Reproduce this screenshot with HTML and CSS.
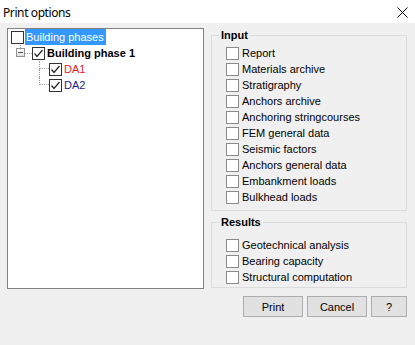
FILE: index.html
```html
<!DOCTYPE html>
<html lang="en">
<head>
    <meta charset="UTF-8">
    <title>Print options</title>
    <link rel="stylesheet" href="styles.css">
</head>
<body>
    <div class="titlebar">
        <span class="title">Print options</span>
        <span class="close">
            <svg width="11" height="11" viewBox="0 0 11 11"><path d="M0.5 0.5 L10.5 10.5 M10.5 0.5 L0.5 10.5" stroke="#000" stroke-width="1"/></svg>
        </span>
    </div>
    <div class="main">
        <div class="tree">
            <div class="node root">
                <span class="cb"></span>
                <span class="label selected">Building phases</span>
            </div>
            <div class="node level1">
                <span class="exp-col">
                    <span class="stub"></span>
                    <span class="expander"><span class="minus"></span></span>
                </span>
                <span class="hline"></span>
                <span class="cb checked"><svg width="11" height="11" viewBox="0 0 11 11"><path d="M1.5 5.5 L4 8.5 L9.5 2" fill="none" stroke="#222" stroke-width="1.2"/></svg></span>
                <span class="label bold">Building phase 1</span>
            </div>
            <div class="node level2">
                <span class="conn"><span class="conn-top"></span><span class="conn-bottom"></span></span>
                <span class="cb checked"><svg width="11" height="11" viewBox="0 0 11 11"><path d="M1.5 5.5 L4 8.5 L9.5 2" fill="none" stroke="#222" stroke-width="1.2"/></svg></span>
                <span class="label red">DA1</span>
            </div>
            <div class="node level2">
                <span class="conn"><span class="conn-top"></span></span>
                <span class="cb checked"><svg width="11" height="11" viewBox="0 0 11 11"><path d="M1.5 5.5 L4 8.5 L9.5 2" fill="none" stroke="#222" stroke-width="1.2"/></svg></span>
                <span class="label navy">DA2</span>
            </div>
        </div>
        <div class="side">
            <fieldset class="group input-group">
                <legend>Input</legend>
                <div class="options">
                    <label class="opt"><span class="box"></span>Report</label>
                    <label class="opt"><span class="box"></span>Materials archive</label>
                    <label class="opt"><span class="box"></span>Stratigraphy</label>
                    <label class="opt"><span class="box"></span>Anchors archive</label>
                    <label class="opt"><span class="box"></span>Anchoring stringcourses</label>
                    <label class="opt"><span class="box"></span>FEM general data</label>
                    <label class="opt"><span class="box"></span>Seismic factors</label>
                    <label class="opt"><span class="box"></span>Anchors general data</label>
                    <label class="opt"><span class="box"></span>Embankment loads</label>
                    <label class="opt"><span class="box"></span>Bulkhead loads</label>
                </div>
            </fieldset>
            <fieldset class="group results-group">
                <legend>Results</legend>
                <div class="options">
                    <label class="opt"><span class="box"></span>Geotechnical analysis</label>
                    <label class="opt"><span class="box"></span>Bearing capacity</label>
                    <label class="opt"><span class="box"></span>Structural computation</label>
                </div>
            </fieldset>
            <div class="buttons">
                <button class="btn wide">Print</button>
                <button class="btn wide">Cancel</button>
                <button class="btn small">?</button>
            </div>
        </div>
    </div>
</body>
</html>
```

FILE: styles.css
```css
body {
    margin: 0;
    width: 415px;
    height: 345px;
    background: #f0f0f0;
    font-family: "Liberation Sans", Arial, sans-serif;
    font-size: 11px;
    color: #000;
    overflow: hidden;
}
.titlebar {
    height: 23px;
    background: #fff;
    display: flex;
    align-items: center;
    justify-content: space-between;
    padding: 0 7px 0 3px;
}
.title {
    font-family: "Noto Sans", sans-serif;
    font-size: 12px;
    letter-spacing: -0.4px;
    padding-top: 1px;
}
.close {
    display: flex;
    width: 11px;
    height: 11px;
    margin-top: 1px;
}
.main {
    display: flex;
    padding: 5px 0 0 7px;
    gap: 7px;
}

/* tree */
.tree {
    width: 195px;
    height: 259px;
    background: #fff;
    border: 1px solid #828282;
}
.node {
    display: flex;
    align-items: center;
    height: 16px;
}
.root {
    padding-left: 3px;
}
.level1 {
    padding-left: 8px;
}
.level2 {
    padding-left: 31px;
}
.cb {
    width: 11px;
    height: 11px;
    border: 1px solid #333;
    background: #fff;
    display: flex;
    flex-shrink: 0;
}
.label {
    padding: 0 2px 0 1px;
    line-height: 16px;
    white-space: nowrap;
}
.selected {
    background: #3399ff;
    color: #fff;
    margin-left: 1px;
}
.bold {
    font-weight: bold;
    margin-left: 1px;
}
.red {
    color: #e31b1b;
    margin-left: 1px;
}
.navy {
    color: #1c1c8c;
    margin-left: 1px;
}
.exp-col {
    display: flex;
    flex-direction: column;
    align-self: flex-start;
    width: 9px;
}
.stub {
    height: 3px;
    margin-left: 4px;
    border-left: 1px dotted #a0a0a0;
}
.expander {
    width: 7px;
    height: 7px;
    border: 1px solid #919191;
    background: linear-gradient(#fff, #e0e0e0);
    display: flex;
    align-items: center;
    justify-content: center;
}
.minus {
    width: 5px;
    height: 1px;
    background: #555;
}
.hline {
    width: 7px;
    border-top: 1px dotted #a0a0a0;
    margin-top: 1px;
}
.conn {
    align-self: stretch;
    display: flex;
    flex-direction: column;
    width: 10px;
}
.conn-top {
    height: 8px;
    border-left: 1px dotted #a0a0a0;
    border-bottom: 1px dotted #a0a0a0;
    box-sizing: border-box;
}
.conn-bottom {
    height: 8px;
    border-left: 1px dotted #a0a0a0;
    box-sizing: border-box;
}

/* right side */
.side {
    width: 196px;
    display: flex;
    flex-direction: column;
}
.group {
    margin: 0;
    padding: 0 0 0 7px;
    border: 1px solid #dcdcdc;
    min-width: 0;
}
.group legend {
    font-weight: bold;
    padding: 0 2px;
    line-height: 13px;
}
.input-group {
    margin-top: 1px;
    padding-top: 3px;
    padding-bottom: 5px;
}
.results-group {
    margin-top: 5px;
    padding-top: 8px;
    padding-bottom: 2px;
}
.options {
    padding-left: 7px;
}
.opt {
    display: flex;
    align-items: center;
    height: 16px;
    white-space: nowrap;
}
.box {
    width: 11px;
    height: 11px;
    border: 1px solid #8a8a8a;
    background: #fff;
    margin-right: 3px;
    flex-shrink: 0;
}
.buttons {
    display: flex;
    justify-content: flex-end;
    gap: 4px;
    margin-top: 8px;
}
.btn {
    height: 21px;
    padding: 0;
    border: 1px solid #adadad;
    background: #e1e1e1;
    font-family: "Liberation Sans", Arial, sans-serif;
    font-size: 11px;
    color: #000;
}
.wide {
    width: 60px;
}
.small {
    width: 36px;
}
```
